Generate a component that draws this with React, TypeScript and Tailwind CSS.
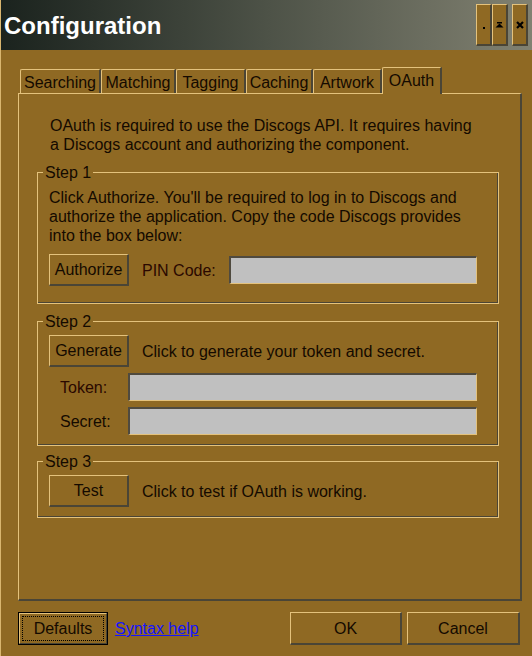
import React from "react";

const BTN =
  "flex items-center justify-center bg-[#8f6923] border-t border-l border-r-2 border-b-2 border-t-[#e4c27c] border-l-[#e4c27c] border-r-[#4a4536] border-b-[#4a4536] text-[16px] leading-[19px] text-[#140a00]";

const FIELD =
  "h-[28px] bg-[#c0c0c0] border-t-2 border-l-2 border-r border-b border-t-[#4f4a3f] border-l-[#4f4a3f] border-r-[#e4c27c] border-b-[#e4c27c]";

function Group({ title, className, children }: { title: string; className: string; children: React.ReactNode }) {
  return (
    <fieldset className={`ml-[18px] w-[462px] border border-[#e4c27c] shadow-[inset_-1px_-1px_0_#4a4536] ${className}`}>
      <legend className="ml-[5px] px-[2px]">{title}</legend>
      {children}
    </fieldset>
  );
}

function TitleButton({ className, children }: { className?: string; children: React.ReactNode }) {
  return (
    <div
      className={`w-[16px] h-[42px] flex items-center justify-center bg-[#8f6923] border-t border-l border-r-2 border-b-2 border-t-[#e4c27c] border-l-[#e4c27c] border-r-[#4a4536] border-b-[#4a4536] ${className ?? ""}`}
    >
      {children}
    </div>
  );
}

const tabs = [
  { label: "Searching", w: "w-[81px]" },
  { label: "Matching", w: "w-[75px]" },
  { label: "Tagging", w: "w-[70px]" },
  { label: "Caching", w: "w-[67px]" },
  { label: "Artwork", w: "w-[69px]" },
];

export default function App() {
  return (
    <div className="w-[532px] h-[656px] overflow-hidden flex flex-col bg-[#8f6923] border-l border-l-[#d9b66f] font-['Liberation_Sans',Arial,sans-serif] text-[16px] leading-[19px] text-[#140a00]">
      {/* title bar */}
      <div className="h-[50px] flex justify-between bg-gradient-to-r from-[#1b231e] via-[#4d5247] to-[#818171]">
        <div className="pl-[3px] pt-[14px] text-[24px] leading-[24px] font-bold text-white">Configuration</div>
        <div className="flex pt-[4px] pr-[4px]">
          <TitleButton>
            <div className="mt-[6px] w-[2px] h-[2px] bg-black" />
          </TitleButton>
          <TitleButton>
            <svg width="9" height="6" viewBox="0 0 9 6">
              <rect x="2" y="0" width="5" height="1.5" fill="#000" />
              <polygon points="4.5,1.5 0.5,5.5 8.5,5.5" fill="#000" />
            </svg>
          </TitleButton>
          <TitleButton className="ml-[4px]">
            <svg width="8" height="8" viewBox="0 0 8 8">
              <path d="M1 1L7 7M7 1L1 7" stroke="#000" strokeWidth="2.2" />
            </svg>
          </TitleButton>
        </div>
      </div>

      <div className="pl-[17px] pr-[10px]">
        {/* tabs */}
        <div className="mt-[17px] h-[26px] flex items-end pl-[2px]">
          {tabs.map((t) => (
            <div
              key={t.label}
              className={`${t.w} h-[24px] flex items-center justify-center pt-[1px] border-t border-l border-r-2 border-t-[#e4c27c] border-l-[#e4c27c] border-r-[#4a4536] rounded-tl-[2px]`}
            >
              {t.label}
            </div>
          ))}
          <div className="relative z-10 -mb-px w-[60px] h-[27px] flex items-start justify-center pt-[3px] bg-[#8f6923] border-t border-l border-r-2 border-t-[#e4c27c] border-l-[#e4c27c] border-r-[#4a4536] rounded-tl-[2px]">
            OAuth
          </div>
        </div>

        {/* panel */}
        <div className="h-[508px] border-t border-l border-r-2 border-b-2 border-t-[#e4c27c] border-l-[#e4c27c] border-r-[#4a4536] border-b-[#4a4536]">
          <p className="pl-[31px] pt-[22px]">
            OAuth is required to use the Discogs API. It requires having
            <br />a Discogs account and authorizing the component.
          </p>

          <Group title="Step 1" className="mt-[9px]">
            <div className="pl-[11px] pt-[6px] pb-[17px]">
              <p>
                Click Authorize. You'll be required to log in to Discogs and
                <br />
                authorize the application. Copy the code Discogs provides
                <br />
                into the box below:
              </p>
              <div className="mt-[9px] flex items-center">
                <button className={`${BTN} w-[80px] h-[32px]`}>Authorize</button>
                <span className="ml-[13px] text-[#2a0800]">PIN Code:</span>
                <div className={`${FIELD} ml-auto mr-[21px] w-[248px]`} />
              </div>
            </div>
          </Group>

          <Group title="Step 2" className="mt-[8px]">
            <div className="pl-[11px] pt-[4px] pb-[10px]">
              <div className="flex items-center">
                <button className={`${BTN} w-[80px] h-[32px]`}>Generate</button>
                <span className="ml-[13px]">Click to generate your token and secret.</span>
              </div>
              <div className="mt-[6px] flex items-center">
                <span className="ml-[11px] text-[#2a0800]">Token:</span>
                <div className={`${FIELD} ml-auto mr-[21px] w-[349px]`} />
              </div>
              <div className="mt-[6px] flex items-center">
                <span className="ml-[11px]">Secret:</span>
                <div className={`${FIELD} ml-auto mr-[21px] w-[349px]`} />
              </div>
            </div>
          </Group>

          <Group title="Step 3" className="mt-[6px]">
            <div className="pl-[11px] pt-[4px] pb-[10px] flex items-center">
              <button className={`${BTN} w-[80px] h-[32px] text-[#2a0800]`}>Test</button>
              <span className="ml-[13px]">Click to test if OAuth is working.</span>
            </div>
          </Group>
        </div>
      </div>

      {/* bottom buttons */}
      <div className="mt-[11px] flex items-center pl-[17px] pr-[12px]">
        <button className="relative w-[90px] h-[33px] flex items-center justify-center border border-black bg-[#8f6923]">
          <span className="absolute inset-0 border border-[#4a4536] border-t-[#e4c27c] border-l-[#e4c27c]" />
          <span className="absolute inset-[3px] border border-dotted border-black" />
          Defaults
        </button>
        <a className="ml-[7px] text-[#1414ff] underline">Syntax help</a>
        <button className={`${BTN} ml-auto w-[112px] h-[33px]`}>OK</button>
        <button className={`${BTN} ml-[5px] w-[113px] h-[33px]`}>Cancel</button>
      </div>
    </div>
  );
}
